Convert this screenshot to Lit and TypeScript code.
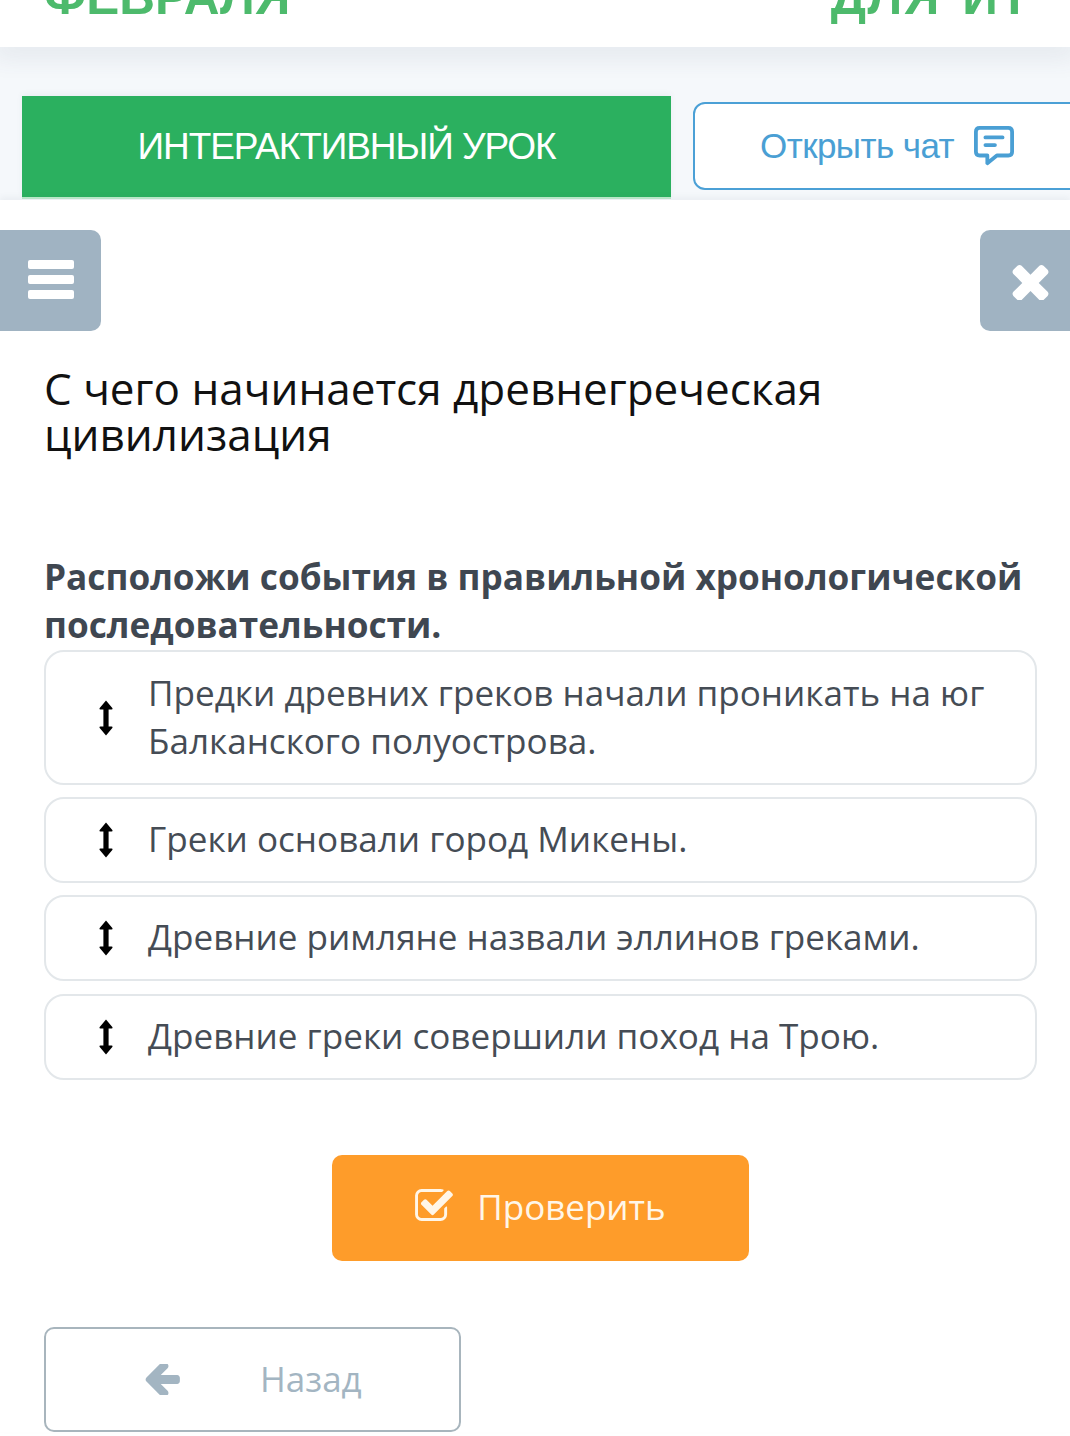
import { LitElement, html, css, svg } from "lit";
import { customElement } from "lit/decorators.js";

const items = [
  "Предки древних греков начали проникать на юг Балканского полуострова.",
  "Греки основали город Микены.",
  "Древние римляне назвали эллинов греками.",
  "Древние греки совершили поход на Трою.",
];

const updown = svg`<svg class="updown" viewBox="0 0 14 36"><path d="M7 0.5 13.5 8.2Q13.8 9.5 12.6 9.5H9.6V26.5H12.6Q13.8 26.5 13.5 27.8L7 35.5 0.5 27.8Q0.2 26.5 1.4 26.5H4.4V9.5H1.4Q0.2 9.5 0.5 8.2Z" fill="#000"/></svg>`;

@customElement("app-root")
export class AppRoot extends LitElement {
  static styles = css`
    :host { display: block; width: 1070px; height: 1436px; overflow: hidden; background: #fff; font-family: "Open Sans", sans-serif; }
    .top { height: 47px; overflow: hidden; background: #fff; display: flex; justify-content: space-between; padding: 0 39px 0 44px; font: 700 49.5px/47px "Liberation Sans", sans-serif; color: #4dba6c; position: relative; z-index: 2; }
    .top span { display: block; margin-top: -27px; }
    .top .right { letter-spacing: 1.5px; word-spacing: 6px; }
    .shade { position: relative; height: 0; z-index: 1; box-shadow: 0 0 26px 8px rgba(60,80,100,.13); }
    .bar { height: 153px; background: #f5f8fb; display: flex; align-items: flex-start; gap: 22px; padding-left: 22px; overflow: hidden; }
    .lesson { flex: 0 0 649px; height: 101px; margin-top: 49px; background: #2bb05f; color: #fff; display: flex; align-items: center; justify-content: center; font: 400 37px "Liberation Sans", sans-serif; letter-spacing: -1.05px; box-shadow: 0 2px 0 #bdeccb, 0 -2px 6px rgba(60,80,100,.06); }
    .chat { flex: 0 0 420px; height: 88px; margin-top: 55px; box-sizing: border-box; border: 2px solid #4ba0d6; border-radius: 12px; background: #fff; color: #4a9fd4; display: flex; align-items: center; padding-left: 65px; gap: 20px; font: 400 35px "Liberation Sans", sans-serif; letter-spacing: -0.55px; }
    .chat svg { width: 40px; height: 40px; }
    .panel { background: #fff; padding-top: 30px; position: relative; z-index: 2; box-shadow: 0 -3px 6px rgba(60,80,100,.06); }
    .tools { display: flex; justify-content: space-between; }
    .tool { height: 101px; background: #a0b3c2; display: flex; align-items: center; justify-content: center; box-sizing: border-box; }
    .tool.menu { width: 101px; border-radius: 0 10px 10px 0; padding-bottom: 2px; }
    .tool.close { width: 90px; border-radius: 10px 0 0 10px; padding-left: 10px; padding-top: 1px; }
    h1 { margin: 34px 0 0 44px; font: 400 44px/46px "Open Sans", sans-serif; color: #111; width: 900px; }
    h2 { margin: 95px 0 0 44px; font: 700 35.2px/48px "Open Sans", sans-serif; color: #3f4751; width: 1000px; }
    .list { margin: 2px 33px 0 44px; display: flex; flex-direction: column; gap: 12.2px; }
    .item { box-sizing: border-box; border: 2px solid #e3e7ea; border-radius: 20px; min-height: 86px; display: flex; align-items: center; padding: 15px 40px 19px 53px; font-size: 35.1px; line-height: 48px; color: #454c55; }
    .item:first-child { padding-top: 16px; }
    .updown { flex: 0 0 14px; width: 14px; height: 36px; margin: 4px 35px 0 0; }
    .check { width: 417px; height: 106px; margin: 75.4px 0 0 332px; background: #fe9c2a; border-radius: 10px; display: flex; align-items: center; justify-content: center; gap: 24px; color: #fff6e8; font-size: 35px; }
    .check span { margin-top: -2px; }
    .check svg { width: 38px; height: 32px; margin-bottom: 6px; }
    .back { box-sizing: border-box; width: 417px; height: 105px; margin: 66px 0 0 44px; border: 2px solid #a8b5bd; border-radius: 10px; display: flex; align-items: center; padding-left: 98px; gap: 80px; color: #a3b5c2; font-size: 35px; }
    .back svg { width: 36px; height: 31px; }
    .back span { margin-top: -2px; }
  `;

  render() {
    return html`
      <div class="top"><span>ФЕВРАЛЯ</span><span class="right">ДЛЯ ИТ</span></div>
      <div class="shade"></div>
      <div class="bar">
        <div class="lesson">ИНТЕРАКТИВНЫЙ УРОК</div>
        <div class="chat">Открыть чат
          <svg viewBox="0 0 42 42" fill="none" stroke="#4a9fd4" stroke-width="4"><path d="M6 2H36Q40 2 40 6V27Q40 31 36 31H24L14 39V31H6Q2 31 2 27V6Q2 2 6 2Z" stroke-linejoin="round"/><path d="M12 12H30M12 20H22" stroke-linecap="round"/></svg>
        </div>
      </div>
      <div class="panel">
        <div class="tools">
          <div class="tool menu"><svg width="46" height="39" viewBox="0 0 46 39" fill="#fff"><rect width="46" height="9" y="0" rx="2"/><rect width="46" height="9" y="15" rx="2"/><rect width="46" height="9" y="30" rx="2"/></svg></div>
          <div class="tool close"><svg width="37" height="38" viewBox="110 270 1188 1256" fill="#fff"><path d="M1298 1322q0 40-28 68l-136 136q-28 28-68 28t-68-28l-294-294-294 294q-28 28-68 28t-68-28l-136-136q-28-28-28-68t28-68l294-294-294-294q-28-28-28-68t28-68l136-136q28-28 68-28t68 28l294 294 294-294q28-28 68-28t68 28l136 136q28 28 28 68t-28 68l-294 294 294 294q28 28 28 68z"/></svg></div>
        </div>
        <h1>С чего начинается древнегреческая цивилизация</h1>
        <h2>Расположи события в правильной хронологической последовательности.</h2>
        <div class="list">
          ${items.map((t) => html`<div class="item">${updown}<span>${t}</span></div>`)}
        </div>
        <div class="check">
          <svg viewBox="64 128 1664 1408" fill="#fff6e8"><path d="M1472 930v318q0 119-84.5 203.5t-203.5 84.5h-832q-119 0-203.5-84.5t-84.5-203.5v-832q0-119 84.5-203.5t203.5-84.5h832q63 0 117 25 15 7 18 23 3 17-9 29l-49 49q-10 10-23 10-3 0-9-2-23-6-45-6h-832q-66 0-113 47t-47 113v832q0 66 47 113t113 47h832q66 0 113-47t47-113v-254q0-13 9-22l64-64q10-10 23-10 6 0 12 3 20 8 20 29zm231-489l-814 814q-24 24-57 24t-57-24l-430-430q-24-24-24-57t24-57l110-110q24-24 57-24t57 24l263 263 647-647q24-24 57-24t57 24l110 110q24 24 24 57t-24 57z"/></svg>
          <span>Проверить</span>
        </div>
        <div class="back">
          <svg viewBox="128 294 1536 1332" fill="#a3b5c2"><path d="M1664 896v128q0 53-32.5 90.5t-84.5 37.5h-704l293 294q38 36 38 90t-38 90l-75 76q-37 37-90 37-52 0-91-37l-651-652q-37-37-37-90 0-52 37-91l651-650q38-38 91-38 52 0 90 38l75 74q38 38 38 91t-38 91l-293 293h704q52 0 84.5 37.5t32.5 90.5z"/></svg>
          <span>Назад</span>
        </div>
      </div>
    `;
  }
}
